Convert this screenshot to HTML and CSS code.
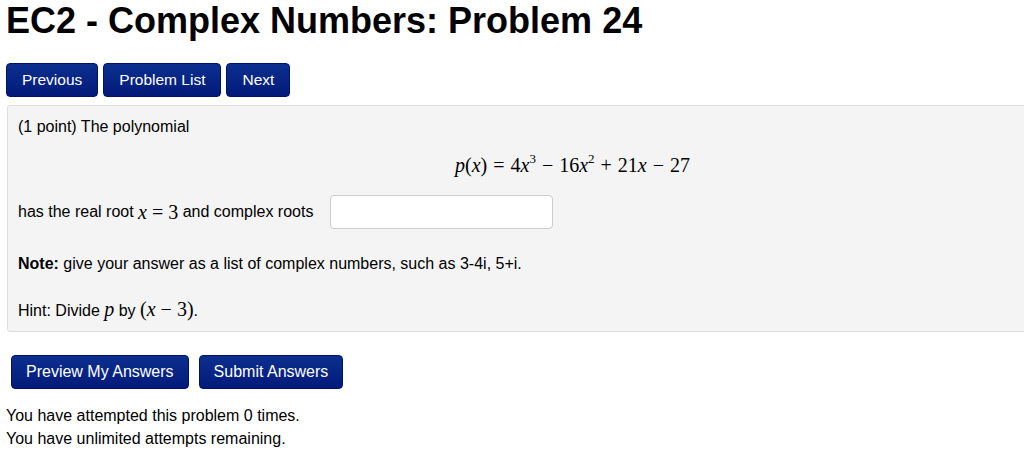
FILE: index.html
```html
<!DOCTYPE html>
<html>
<head>
<meta charset="utf-8">
<link rel="stylesheet" href="styles.css">
</head>
<body>
<h1 class="title">EC2 - Complex Numbers: Problem 24</h1>
<div class="nav">
  <a class="btn">Previous</a>
  <a class="btn">Problem List</a>
  <a class="btn">Next</a>
</div>
<div class="problem">
  <p class="line">(1 point) The polynomial</p>
  <div class="display"><span class="math"><i>p</i>(<i>x</i>)<span class="op">=</span>4<i>x</i><sup>3</sup><span class="op">−</span>16<i>x</i><sup>2</sup><span class="op">+</span>21<i>x</i><span class="op">−</span>27</span></div>
  <div class="line answer">has the real root <span class="math"><i>x</i> = 3</span> and complex roots <input class="field" type="text"></div>
  <p class="line note"><b>Note:</b> give your answer as a list of complex numbers, such as 3-4i, 5+i.</p>
  <p class="line hint">Hint: Divide <span class="math"><i>p</i></span> by <span class="math">(<i>x</i> − 3)</span>.</p>
</div>
<div class="actions">
  <a class="btn big">Preview My Answers</a>
  <a class="btn big">Submit Answers</a>
</div>
<div class="status">
  <div>You have attempted this problem 0 times.</div>
  <div>You have unlimited attempts remaining.</div>
</div>
</body>
</html>
```
FILE: styles.css
```css
html, body {
  margin: 0;
  padding: 0;
  background: #fff;
  overflow: hidden;
}
body {
  font-family: "Liberation Sans", Arial, sans-serif;
  color: #000;
  width: 1100px;
  padding-left: 6px;
}
.title {
  font-size: 36px;
  font-weight: bold;
  margin: 0;
  padding-top: 1px;
  line-height: 40px;
}
.nav {
  display: flex;
  gap: 5px;
  margin-top: 22px;
}
.btn {
  display: inline-flex;
  align-items: center;
  justify-content: center;
  height: 34px;
  box-sizing: border-box;
  padding: 0 15px;
  color: #fff;
  font-size: 15.5px;
  background: linear-gradient(#0c2f8f, #021a7a);
  border: 1px solid #011366;
  border-radius: 4px;
}
.problem {
  margin-top: 8px;
  margin-left: 1px;
  background: #f4f4f4;
  border: 1px solid #ddd;
  border-radius: 3px;
  padding: 11px 10px 0 10px;
  height: 214px;
  font-size: 16px;
}
.line {
  margin: 0;
  line-height: 20px;
}
.display {
  padding-left: 437px;
  margin-top: 16px;
  height: 24px;
  line-height: 24px;
}
.math {
  font-family: "Liberation Serif", "Times New Roman", serif;
  font-size: 20px;
}
.op {
  margin: 0 6px;
}
.math sup {
  font-size: 13px;
  vertical-align: 9px;
  line-height: 0;
}
.answer {
  display: flex;
  align-items: center;
  white-space: pre;
  margin-top: 18px;
  height: 34px;
}
.field {
  margin-left: 12px;
  width: 223px;
  height: 34px;
  box-sizing: border-box;
  border: 1px solid #ccc;
  border-radius: 4px;
  background: #fff;
}
.note {
  margin-top: 25px;
}
.hint {
  margin-top: 25px;
}
.actions {
  display: flex;
  gap: 10px;
  margin-top: 23px;
  margin-left: 5px;
}
.big {
  padding: 0 14px;
  font-size: 16px;
}
.status {
  margin-top: 15px;
  font-size: 16px;
  line-height: 23px;
}
```
